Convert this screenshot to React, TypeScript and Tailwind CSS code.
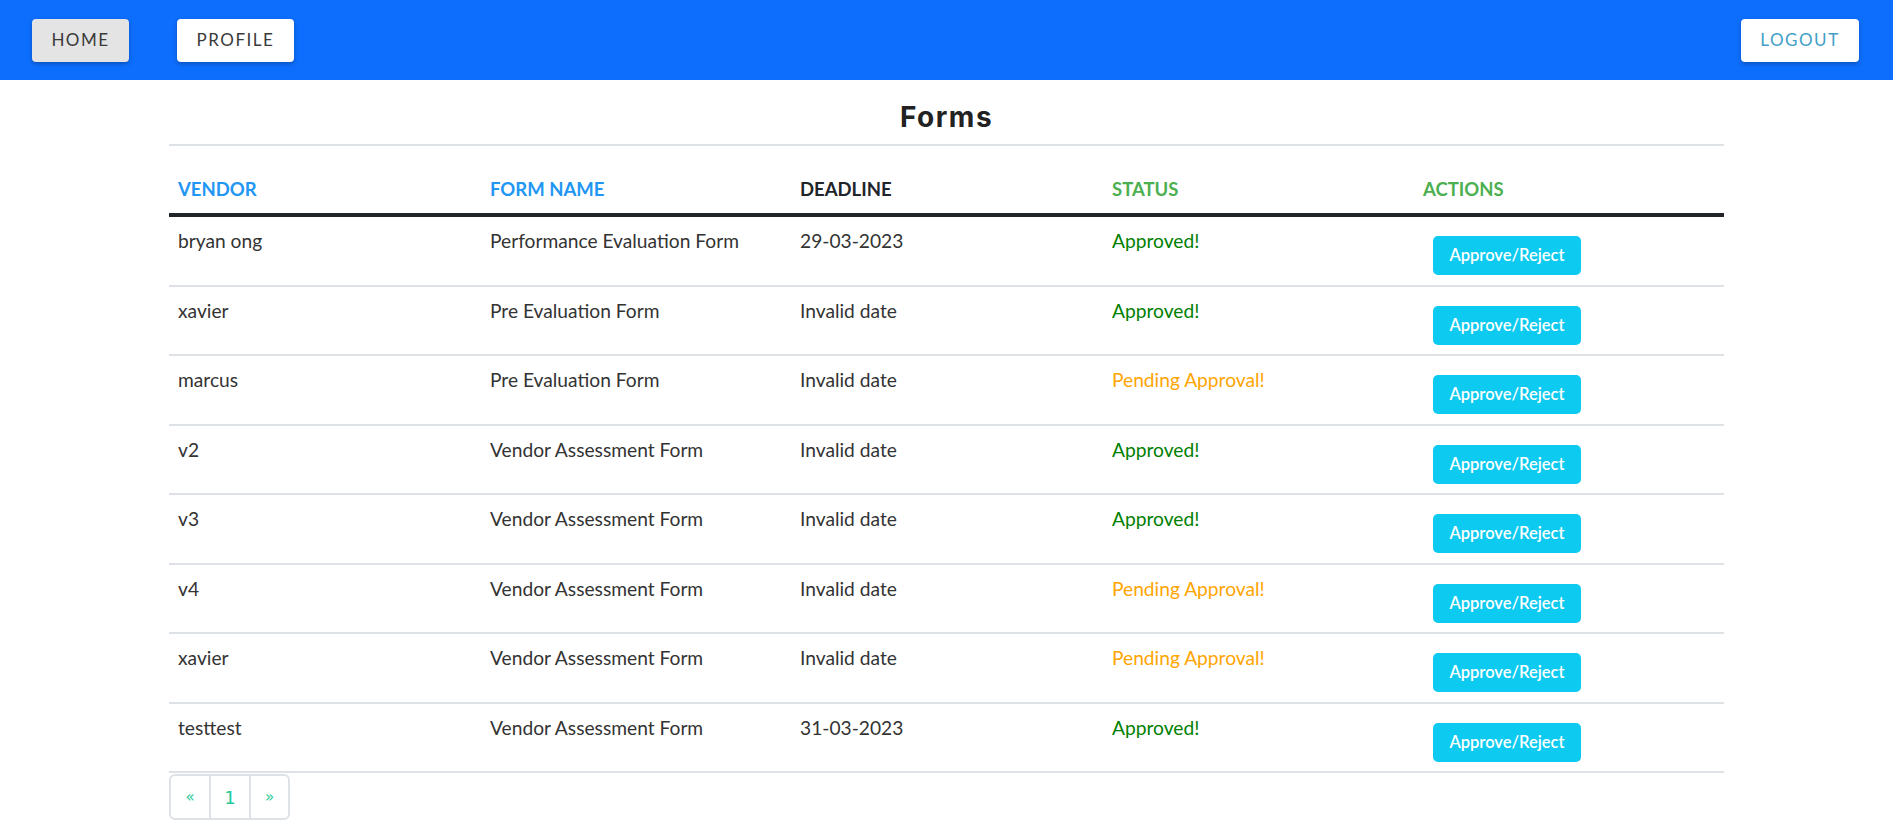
import React from "react";

const forms = [
  { vendor: "bryan ong", name: "Performance Evaluation Form", deadline: "29-03-2023", approved: true },
  { vendor: "xavier", name: "Pre Evaluation Form", deadline: "Invalid date", approved: true },
  { vendor: "marcus", name: "Pre Evaluation Form", deadline: "Invalid date", approved: false },
  { vendor: "v2", name: "Vendor Assessment Form", deadline: "Invalid date", approved: true },
  { vendor: "v3", name: "Vendor Assessment Form", deadline: "Invalid date", approved: true },
  { vendor: "v4", name: "Vendor Assessment Form", deadline: "Invalid date", approved: false },
  { vendor: "xavier", name: "Vendor Assessment Form", deadline: "Invalid date", approved: false },
  { vendor: "testtest", name: "Vendor Assessment Form", deadline: "31-03-2023", approved: true },
];

const navBtn =
  "h-[43px] rounded-[4px] text-[17px] tracking-[1.5px] uppercase shadow-[0_2px_4px_rgba(0,0,0,0.25)] flex items-center justify-center";

export default function App() {
  return (
    <div className="min-h-screen bg-white font-['Lato','Liberation_Sans',sans-serif]">
      {/* Navbar */}
      <header className="h-[80px] bg-[#0d6efd] flex items-center justify-between pl-[32px] pr-[34px]">
        <div className="flex items-center gap-[48px]">
          <button className={`${navBtn} w-[97px] bg-[#e4e4e4] text-[#3a3a3a]`}>Home</button>
          <button className={`${navBtn} w-[117px] bg-white text-[#3a3a3a]`}>Profile</button>
        </div>
        <button className={`${navBtn} w-[118px] bg-white text-[#3f9fc7]`}>Logout</button>
      </header>

      <main className="w-[1555px] mx-auto">
        <h2 className="pt-[23px] pb-[13px] leading-[28px] text-center text-[28px] font-bold tracking-[1.5px] text-[#222] font-['Inter','Open_Sans',sans-serif] border-b-2 border-[#dee2e6]">
          Forms
        </h2>

        {/* Table header */}
        <div className="grid grid-cols-5 h-[71px] items-end pb-[10px] border-b-4 border-[#212529] text-[18.5px] font-bold leading-[27px] uppercase">
          <div className="pl-[9px] text-[#2196f3]">Vendor</div>
          <div className="pl-[10px] text-[#2196f3]">Form Name</div>
          <div className="pl-[9px] text-[#212529]">Deadline</div>
          <div className="pl-[10px] text-[#4caf50]">Status</div>
          <div className="pl-[10px] text-[#4caf50]">Actions</div>
        </div>

        {/* Rows */}
        {forms.map((f, i) => (
          <div
            key={i}
            className="grid grid-cols-5 h-[69.5px] border-b-2 border-[#dee2e6] text-[19.2px] leading-[27px] text-[#333]"
          >
            <div className="pl-[9px] pt-[10px]">{f.vendor}</div>
            <div className="pl-[10px] pt-[10px]">{f.name}</div>
            <div className="pl-[9px] pt-[10px]">{f.deadline}</div>
            <div className={`pl-[10px] pt-[10px] ${f.approved ? "text-[#008000]" : "text-[#ffa500]"}`}>
              {f.approved ? "Approved!" : "Pending Approval!"}
            </div>
            <div className="pl-[10px] pt-[19px]">
              <button className="ml-[10px] h-[39px] w-[148px] rounded-[5px] bg-[#0dcaf0] text-white text-[16.5px] font-semibold">
                Approve/Reject
              </button>
            </div>
          </div>
        ))}

        {/* Pagination */}
        <div className="mt-[1px] inline-flex h-[46px] border-2 border-[#dee2e6] rounded-[6px] text-[#20c997] font-['DejaVu_Sans',sans-serif]">
          <span className="w-[38px] flex items-center justify-center text-[15px]">«</span>
          <span className="w-[42px] flex items-center justify-center text-[18px] border-x-2 border-[#dee2e6]">1</span>
          <span className="w-[37px] flex items-center justify-center text-[15px]">»</span>
        </div>
      </main>
    </div>
  );
}
